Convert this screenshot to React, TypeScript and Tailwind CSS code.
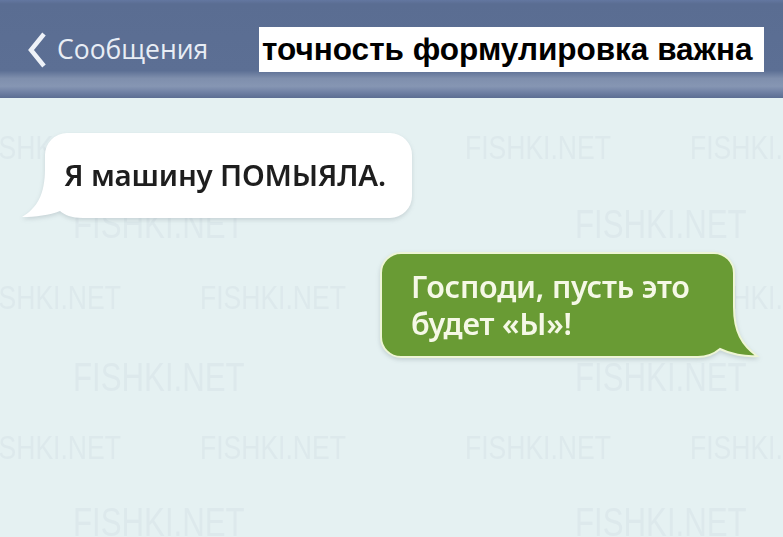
import React from 'react';

const marks = [
  { x: -25, y: 130, big: false },
  { x: 465, y: 130, big: false },
  { x: 690, y: 130, big: false },
  { x: 73, y: 204, big: true },
  { x: 575, y: 204, big: true },
  { x: -25, y: 280, big: false },
  { x: 200, y: 280, big: false },
  { x: 465, y: 280, big: false },
  { x: 690, y: 280, big: false },
  { x: 73, y: 357, big: true },
  { x: 575, y: 357, big: true },
  { x: -25, y: 430, big: false },
  { x: 200, y: 430, big: false },
  { x: 465, y: 430, big: false },
  { x: 690, y: 430, big: false },
  { x: 73, y: 502, big: true },
  { x: 575, y: 502, big: true },
];

function Watermarks() {
  return (
    <div className="pointer-events-none absolute inset-0">
      {marks.map((m, i) => (
        <span
          key={i}
          className={`absolute origin-left scale-x-[0.78] whitespace-nowrap font-['Liberation_Sans',sans-serif] leading-none text-[#dde9ec] ${
            m.big ? 'text-[40px]' : 'text-[34px]'
          }`}
          style={{ left: m.x, top: m.y }}
        >
          FISHKI.NET
        </span>
      ))}
    </div>
  );
}

export default function App() {
  return (
    <div className="relative h-[537px] w-[783px] overflow-hidden bg-[#e5f1f2] font-['Noto_Sans','Open_Sans',sans-serif]">
      <Watermarks />

      {/* top bar */}
      <header className="relative flex h-[98px] items-start bg-[linear-gradient(to_bottom,#6377a0_0%,#5a6d92_4%,#5c6f94_72%,#7f8fad_80%,#8696b3_88%,#7081a4_94%,#5b6d92_100%)] pt-[27px]">
        <div className="flex h-[45px] items-center pl-[27px]">
          <svg width="20" height="38" viewBox="0 0 20 38" className="mr-[10px]">
            <path d="M17 3 L4 19 L17 35" fill="none" stroke="#eef2f8" strokeWidth="4.5" strokeLinejoin="miter" />
          </svg>
          <span className="font-['Open_Sans',sans-serif] text-[26.5px] text-[#e8edf5]">Сообщения</span>
        </div>
        <div className="ml-auto mr-[19px] flex h-[45px] w-[505px] items-center bg-white pl-[3px]">
          <span className="font-['Liberation_Sans',Arial,sans-serif] text-[31.5px] font-bold leading-none text-black">
            точность формулировка важна
          </span>
        </div>
      </header>

      {/* chat */}
      <div className="relative flex flex-col pt-[35px]">
        <div className="relative ml-[45px] flex h-[85px] w-[367px] items-center pl-[19px] drop-shadow-[0_2px_2px_rgba(60,80,90,0.18)]">
          <svg className="absolute left-0 top-0 overflow-visible" width="367" height="85" viewBox="0 0 367 85">
            <path
              d="M22 0 H345 A22 22 0 0 1 367 22 V63 A22 22 0 0 1 345 85 H38 C26 85 20 82 15 78 C5 82 -10 84 -23 84 C-8 75 0 62 0 35 V22 A22 22 0 0 1 22 0 Z"
              fill="#ffffff"
            />
          </svg>
          <span className="relative text-[29.5px] font-semibold tracking-[-0.2px] text-[#1e1e1e]">Я машину ПОМЫЯЛА.</span>
        </div>

        <div className="relative ml-[380px] mt-[34px] flex h-[106px] w-[355px] flex-col justify-center pl-[31px] drop-shadow-[0_2px_2px_rgba(60,80,90,0.2)]">
          <svg className="absolute left-0 top-0 overflow-visible" width="355" height="106" viewBox="0 0 355 106">
            <path
              d="M21 1 H334 A20 20 0 0 1 354 21 V55 C354 80 362 93 377 104 C365 105 350 102 340 97 C334 102 328 105 318 105 H21 A20 20 0 0 1 1 85 V21 A20 20 0 0 1 21 1 Z"
              fill="#699b34"
              stroke="#eef5d6"
              strokeWidth="2"
            />
          </svg>
          <p className="relative text-[30.5px] font-semibold leading-[37px] tracking-[-0.2px] text-[#f5f8e6]">
            Господи, пусть это
            <br />
            будет «Ы»!
          </p>
        </div>
      </div>
    </div>
  );
}
